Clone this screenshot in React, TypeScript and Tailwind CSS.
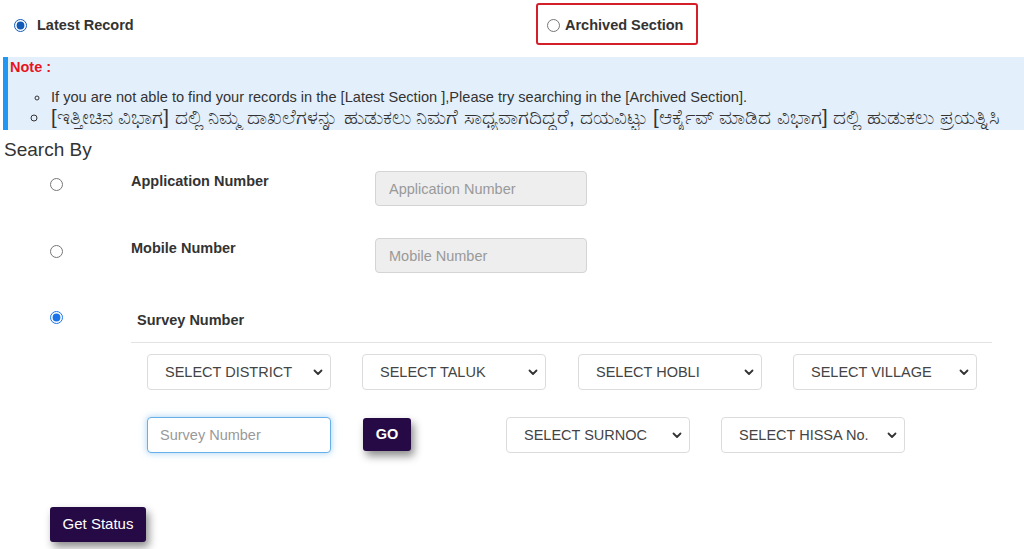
import React from 'react';

const font = { fontFamily: '"Liberation Sans", Arial, "Noto Sans", sans-serif' };

const Chevron = () => (
  <svg width="10" height="7" viewBox="0 0 10 7" className="shrink-0">
    <path d="M1.5 1.5 L5 5 L8.5 1.5" fill="none" stroke="#333" strokeWidth="1.8" strokeLinecap="round" strokeLinejoin="round" />
  </svg>
);

const FakeSelect = ({ label, className = '' }: { label: string; className?: string }) => (
  <div className={`flex h-[36px] w-[184px] items-center justify-between rounded-[4px] border border-[#dcdcdc] bg-white pl-[17px] pr-[7px] pt-[1px] text-[14.5px] text-[#444] ${className}`}>
    <span>{label}</span>
    <Chevron />
  </div>
);

const App = () => {
  return (
    <div className="h-[549px] w-[1024px] overflow-hidden bg-white text-[#333]" style={font}>
      {/* Top radios */}
      <div className="flex h-[57px] items-start">
        <label className="flex w-[536px] items-center gap-[10px] pl-[14px] pt-[15px] text-[14.5px] font-bold">
          <input type="radio" name="section" defaultChecked className="m-0 h-[13px] w-[13px] accent-[#1a73e8]" />
          <span>Latest Record</span>
        </label>
        <div className="mt-[3px] flex h-[42px] w-[162px] items-start rounded-[3px] border-2 border-[#d41f2b] pl-[9px] pt-[10px]">
          <label className="flex items-center gap-[5px] text-[14.5px] font-bold">
            <input type="radio" name="section" className="m-0 h-[13px] w-[13px]" />
            <span>Archived Section</span>
          </label>
        </div>
      </div>

      {/* Note box */}
      <div className="ml-[3px] h-[73px] overflow-hidden border-l-[5px] border-[#2196f3] bg-[#e3f0fc] pl-[2px] leading-[20px]">
        <div className="text-[14.5px] font-bold text-[#e8141c]">Note :</div>
        <ul className="mt-[10px] list-[circle] pl-[40px] text-[14.6px] text-[#333]">
          <li className="pl-[1px]">If you are not able to find your records in the [Latest Section ],Please try searching in the [Archived Section].</li>
          <li className="whitespace-nowrap pl-[1px] text-[20.4px]">[ಇತ್ತೀಚಿನ ವಿಭಾಗ] ದಲ್ಲಿ ನಿಮ್ಮ ದಾಖಲೆಗಳನ್ನು ಹುಡುಕಲು ನಿಮಗೆ ಸಾಧ್ಯವಾಗದಿದ್ದರೆ, ದಯವಿಟ್ಟು [ಆರ್ಕೈವ್ ಮಾಡಿದ ವಿಭಾಗ] ದಲ್ಲಿ ಹುಡುಕಲು ಪ್ರಯತ್ನಿಸಿ</li>
        </ul>
      </div>

      {/* Search By */}
      <div className="mt-[9px] pl-[4px] text-[19px] leading-[22px] text-[#333]">Search By</div>

      {/* Application Number */}
      <div className="mt-[10px] flex h-[35px] items-start">
        <div className="w-[131px] pl-[50px] pt-[7px]">
          <input type="radio" name="by" className="m-0 block h-[13px] w-[13px]" />
        </div>
        <div className="w-[244px] pt-[1px] text-[14.5px] font-bold leading-[18px]">Application Number</div>
        <input
          placeholder="Application Number"
          disabled
          className="h-[35px] w-[212px] rounded-[4px] border border-[#d4d4d4] bg-[#eeeeee] px-[13px] text-[14.5px] placeholder:text-[#999]"
        />
      </div>

      {/* Mobile Number */}
      <div className="mt-[32px] flex h-[35px] items-start">
        <div className="w-[131px] pl-[50px] pt-[7px]">
          <input type="radio" name="by" className="m-0 block h-[13px] w-[13px]" />
        </div>
        <div className="w-[244px] pt-[1px] text-[14.5px] font-bold leading-[18px]">Mobile Number</div>
        <input
          placeholder="Mobile Number"
          disabled
          className="h-[35px] w-[212px] rounded-[4px] border border-[#d4d4d4] bg-[#eeeeee] px-[13px] text-[14.5px] placeholder:text-[#999]"
        />
      </div>

      {/* Survey Number */}
      <div className="mt-[32px] flex items-start">
        <div className="w-[137px] pl-[50px] pt-[6px]">
          <input type="radio" name="by" defaultChecked className="m-0 block h-[13px] w-[13px] accent-[#1a73e8]" />
        </div>
        <div className="pt-[6px] text-[14.5px] font-bold leading-[18px]">Survey Number</div>
      </div>

      <div className="ml-[131px] mt-[13px] w-[861px] border-t border-[#e2e2e2]" />

      {/* Select row 1 */}
      <div className="mt-[11px] flex gap-[31px] pl-[147px]">
        <FakeSelect label="SELECT DISTRICT" />
        <FakeSelect label="SELECT TALUK" />
        <FakeSelect label="SELECT HOBLI" className="ml-[1px]" />
        <FakeSelect label="SELECT VILLAGE" />
      </div>

      {/* Select row 2 */}
      <div className="mt-[27px] flex items-start pl-[147px]">
        <input
          placeholder="Survey Number"
          autoFocus
          className="h-[36px] w-[184px] rounded-[4px] border border-[#66afe9] bg-white px-[12px] text-[14.5px] shadow-[0_0_7px_rgba(102,175,233,0.6)] outline-none placeholder:text-[#999]"
        />
        <button className="ml-[32px] mt-[1px] h-[33px] w-[48px] rounded-[3px] bg-[#260a45] text-[14.5px] font-bold text-white shadow-[3px_5px_8px_rgba(0,0,0,0.45)]">
          GO
        </button>
        <FakeSelect label="SELECT SURNOC" className="ml-[95px]" />
        <FakeSelect label="SELECT HISSA No." className="ml-[31px]" />
      </div>

      {/* Get Status */}
      <button className="ml-[50px] mt-[54px] h-[35px] w-[96px] rounded-[3px] bg-[#260a45] text-[15px] text-white shadow-[3px_5px_8px_rgba(0,0,0,0.45)]">
        Get Status
      </button>
    </div>
  );
};

export default App;
